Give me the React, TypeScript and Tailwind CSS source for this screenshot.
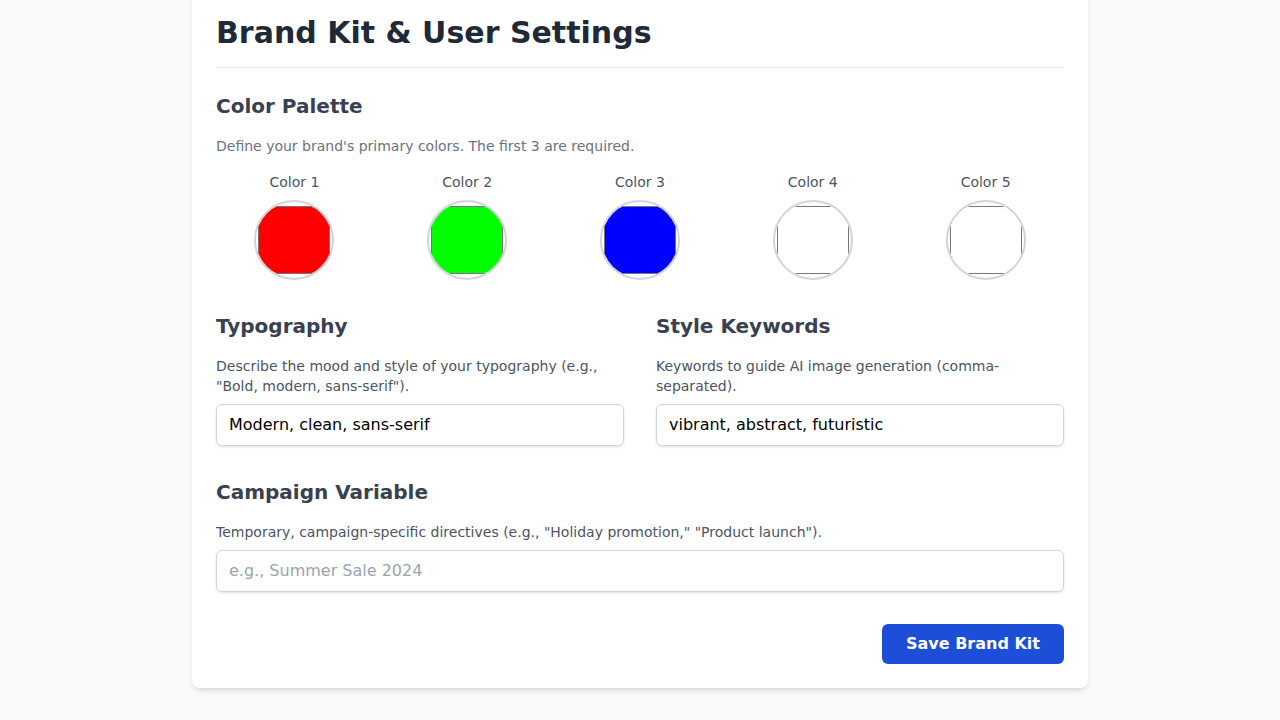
import { useState } from 'react'

const initialColors = ['#ff0000', '#00ff00', '#0000ff', '#ffffff', '#ffffff']

export default function App() {
  const [colors, setColors] = useState(initialColors)
  const [typography, setTypography] = useState('Modern, clean, sans-serif')
  const [keywords, setKeywords] = useState('vibrant, abstract, futuristic')
  const [campaign, setCampaign] = useState('')

  const updateColor = (i: number, value: string) => {
    setColors((prev) => prev.map((c, idx) => (idx === i ? value : c)))
  }

  const inputClass =
    'w-full px-3 py-2 text-base text-black border border-[#d1d5db] rounded-md shadow-sm placeholder:text-[#9ca3af] focus:outline-none focus:ring-2 focus:ring-blue-500'

  return (
    <div className="min-h-screen bg-[#f9fafb] px-8 pb-8 font-['DejaVu_Sans',sans-serif]">
      <div className="max-w-4xl mx-auto -mt-[12px] bg-white rounded-lg shadow-md px-6 pt-[27px] pb-6">
        {/* Header */}
        <h1 className="text-3xl font-bold text-[#1f2937] pb-4 border-b border-[#e5e7eb]">
          Brand Kit &amp; User Settings
        </h1>

        {/* Color palette */}
        <section className="mt-6">
          <h2 className="text-xl font-bold text-[#374151] mb-4">Color Palette</h2>
          <p className="text-sm text-[#6b7280] mb-4">
            Define your brand's primary colors. The first 3 are required.
          </p>
          <div className="grid grid-cols-5 gap-4">
            {colors.map((c, i) => (
              <div key={i} className="flex flex-col items-center">
                <label className="text-sm text-[#4b5563] mb-2">Color {i + 1}</label>
                <input
                  type="color"
                  value={c}
                  onChange={(e) => updateColor(i, e.target.value)}
                  className="w-20 h-20 rounded-full border-2 border-[#d1d5db] cursor-pointer bg-white"
                />
              </div>
            ))}
          </div>
        </section>

        {/* Typography + keywords */}
        <div className="grid grid-cols-2 gap-8 mt-8">
          <section>
            <h2 className="text-xl font-bold text-[#374151] mb-4">Typography</h2>
            <p className="text-sm text-[#4b5563] mb-2">
              Describe the mood and style of your typography (e.g., "Bold, modern, sans-serif").
            </p>
            <input
              type="text"
              value={typography}
              onChange={(e) => setTypography(e.target.value)}
              className={inputClass}
            />
          </section>
          <section>
            <h2 className="text-xl font-bold text-[#374151] mb-4">Style Keywords</h2>
            <p className="text-sm text-[#4b5563] mb-2">
              Keywords to guide AI image generation (comma-separated).
            </p>
            <input
              type="text"
              value={keywords}
              onChange={(e) => setKeywords(e.target.value)}
              className={inputClass}
            />
          </section>
        </div>

        {/* Campaign */}
        <section className="mt-8">
          <h2 className="text-xl font-bold text-[#374151] mb-4">Campaign Variable</h2>
          <p className="text-sm text-[#4b5563] mb-2">
            Temporary, campaign-specific directives (e.g., "Holiday promotion," "Product launch").
          </p>
          <input
            type="text"
            value={campaign}
            placeholder="e.g., Summer Sale 2024"
            onChange={(e) => setCampaign(e.target.value)}
            className={inputClass}
          />
        </section>

        <div className="flex justify-end mt-8">
          <button className="px-6 py-2 bg-[#1d4ed8] hover:bg-[#1e40af] text-white text-base font-bold rounded-md">
            Save Brand Kit
          </button>
        </div>
      </div>
    </div>
  )
}
